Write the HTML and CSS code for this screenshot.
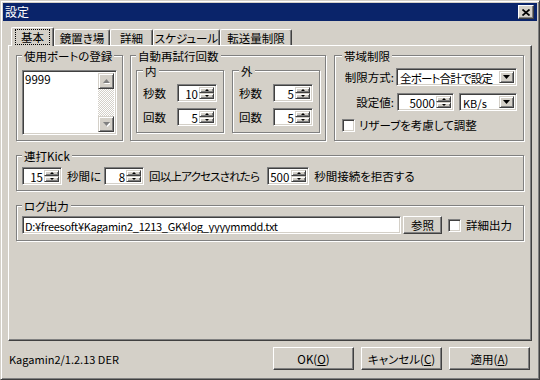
FILE: index.html
```html
<!DOCTYPE html>
<html>

<head>
	<meta charset="utf-8">
	<title>設定</title>
	<link rel="stylesheet" href="styles.css">
</head>

<body>

	<div class="window">
		<div class="titlebar">
			<span class="title">設定</span>
			<button class="btnClose raised" title="閉じる">
				<svg width="8" height="7" viewBox="0 0 8 7"><path d="M0.5 0.5 L7.5 6.5 M7.5 0.5 L0.5 6.5" stroke="#000" stroke-width="1.7"/></svg>
			</button>
		</div>

		<div class="client">
			<div class="tabs">
				<div class="tab selected w43"><span class="focus">基本</span></div>
				<div class="tab w56">鏡置き場</div>
				<div class="tab w43">詳細</div>
				<div class="tab w67">スケジュール</div>
				<div class="tab w72">転送量制限</div>
			</div>

			<div class="panel">
				<div class="topRow">
					<!-- ports -->
					<div class="group ports">
						<span class="groupTitle">使用ポートの登録</span>
						<div class="listbox sunken">
							<div class="listItems">9999</div>
							<div class="scrollbar">
								<span class="scrollBtn small">
									<svg width="7" height="5" viewBox="0 0 7 5"><polygon points="4.5,1 8,5 1,5" fill="#fff"/><polygon points="3.5,0 7,4 0,4" fill="#808080"/></svg>
								</span>
								<span class="scrollTrack"></span>
								<span class="scrollBtn small">
									<svg width="7" height="5" viewBox="0 0 7 5"><polygon points="1,1 8,1 4.5,5" fill="#fff"/><polygon points="0,0 7,0 3.5,4" fill="#808080"/></svg>
								</span>
							</div>
						</div>
					</div>

					<!-- retry -->
					<div class="group retry">
						<span class="groupTitle">自動再試行回数</span>
						<div class="retryBoxes">
							<div class="group sub">
								<span class="groupTitle">内</span>
								<div class="subRow">
									<span>秒数</span>
									<div class="spin sunken w40"><span class="val">10</span><span class="spinBtns"><span class="small up"></span><span class="small down"></span></span></div>
								</div>
								<div class="subRow">
									<span>回数</span>
									<div class="spin sunken w40"><span class="val">5</span><span class="spinBtns"><span class="small up"></span><span class="small down"></span></span></div>
								</div>
							</div>
							<div class="group sub">
								<span class="groupTitle">外</span>
								<div class="subRow">
									<span>秒数</span>
									<div class="spin sunken w40"><span class="val">5</span><span class="spinBtns"><span class="small up"></span><span class="small down"></span></span></div>
								</div>
								<div class="subRow">
									<span>回数</span>
									<div class="spin sunken w40"><span class="val">5</span><span class="spinBtns"><span class="small up"></span><span class="small down"></span></span></div>
								</div>
							</div>
						</div>
					</div>

					<!-- bandwidth -->
					<div class="group band">
						<span class="groupTitle">帯域制限</span>
						<div class="bandRow">
							<span class="bandLabel">制限方式:</span>
							<div class="combo sunken w121">
								<span class="comboText tight">全ポート合計で設定</span>
								<span class="comboBtn small"><svg width="7" height="4" viewBox="0 0 7 4"><polygon points="0,0 7,0 3.5,4" fill="#000"/></svg></span>
							</div>
						</div>
						<div class="bandRow">
							<span class="bandLabel gap3">設定値:</span>
							<div class="spin sunken w57"><span class="val">5000</span><span class="spinBtns"><span class="small up"></span><span class="small down"></span></span></div>
							<div class="combo sunken w58 ml5">
								<span class="comboText latin">KB/s</span>
								<span class="comboBtn small"><svg width="7" height="4" viewBox="0 0 7 4"><polygon points="0,0 7,0 3.5,4" fill="#000"/></svg></span>
							</div>
						</div>
						<div class="bandRow check">
							<span class="checkbox sunken"></span>
							<span class="checkLabel">リザーブを考慮して調整</span>
						</div>
					</div>
				</div>

				<!-- kick -->
				<div class="group kick">
					<span class="groupTitle">連打Kick</span>
					<div class="kickRow">
						<div class="spin sunken w40"><span class="val">15</span><span class="spinBtns"><span class="small up"></span><span class="small down"></span></span></div>
						<span class="kickText">秒間に</span>
						<div class="spin sunken w40"><span class="val">8</span><span class="spinBtns"><span class="small up"></span><span class="small down"></span></span></div>
						<span class="kickText tight wide">回以上アクセスされたら</span>
						<div class="spin sunken w42"><span class="val left">500</span><span class="spinBtns"><span class="small up"></span><span class="small down"></span></span></div>
						<span class="kickText">秒間接続を拒否する</span>
					</div>
				</div>

				<!-- log -->
				<div class="group log">
					<span class="groupTitle">ログ出力</span>
					<div class="logRow">
						<div class="textbox sunken latin path">D:¥freesoft¥Kagamin2_1213_GK¥log_yyyymmdd.txt</div>
						<button class="btn raised btnBrowse">参照</button>
						<span class="checkbox sunken ml6"></span>
						<span class="checkLabel ml5">詳細出力</span>
					</div>
				</div>
			</div>

			<div class="footer">
				<span class="version latin">Kagamin2/1.2.13 DER</span>
				<button class="btn raised btnFoot">OK(<u>O</u>)</button>
				<button class="btn raised btnFoot">キャンセル(<u>C</u>)</button>
				<button class="btn raised btnFoot last">適用(<u>A</u>)</button>
			</div>
		</div>
	</div>

</body>

</html>
```

FILE: styles.css
```css
* {
	box-sizing: border-box;
}

html, body {
	margin: 0;
	background: #d4d0c8;
	font-family: 'Noto Sans CJK JP', 'Noto Sans', sans-serif;
	font-feature-settings: "palt";
	font-size: 11.5px;
	line-height: 14px;
	color: #000;
}

button {
	font: inherit;
	color: #000;
	padding: 0;
	margin: 0;
}

.latin {
	font-size: 11px;
}

.tight {
	letter-spacing: -0.8px;
}

/* bevels */
.raised {
	background: #d4d0c8;
	border: 1px solid;
	border-color: #fff #404040 #404040 #fff;
	box-shadow: inset -1px -1px #808080;
}

.small {
	background: #d4d0c8;
	border: 1px solid;
	border-color: #d4d0c8 #404040 #404040 #d4d0c8;
	box-shadow: inset 1px 1px #fff, inset -1px -1px #808080;
}

.sunken {
	background: #fff;
	border: 1px solid;
	border-color: #808080 #fff #fff #808080;
	box-shadow: inset 1px 1px #404040, inset -1px -1px #d4d0c8;
}

/* window */
.window {
	width: 540px;
	height: 380px;
	display: flex;
	flex-direction: column;
	padding: 2px;
	border: 1px solid;
	border-color: #d4d0c8 #404040 #404040 #d4d0c8;
	box-shadow: inset 1px 1px #fff, inset -1px -1px #808080;
}

.titlebar {
	height: 18px;
	background: #0a246a;
	color: #fff;
	display: flex;
	align-items: center;
	justify-content: space-between;
	padding: 0 3px 0 2px;
	font-size: 12px;
}

.btnClose {
	width: 16px;
	height: 14px;
	display: flex;
	align-items: center;
	justify-content: center;
}

.client {
	flex: 1;
	padding: 0 5px;
}

/* tabs */
.tabs {
	position: relative;
	z-index: 1;
	display: flex;
	align-items: flex-end;
	margin-top: 6px;
	margin-bottom: -1px;
	padding-left: 3px;
}

.tab {
	height: 16px;
	margin-bottom: 1px;
	background: #d4d0c8;
	border-top: 1px solid #fff;
	border-left: 1px solid #fff;
	border-right: 1px solid #404040;
	border-radius: 2px 2px 0 0;
	box-shadow: inset -1px 0 #808080;
	display: flex;
	align-items: center;
	justify-content: center;
	padding-top: 1px;
	white-space: nowrap;
}

.tab.selected {
	height: 19px;
	margin-bottom: 0;
	padding-bottom: 2px;
}

.focus {
	outline: 1px dotted #000;
	padding: 0 5px;
	line-height: 14px;
}

.w43 { width: 43px; }
.w56 { width: 56px; }
.w67 { width: 67px; }
.w72 { width: 72px; }

/* panel */
.panel {
	height: 296px;
	border: 1px solid;
	border-color: #fff #404040 #404040 #fff;
	box-shadow: inset -1px -1px #808080;
	padding: 9px 7px 0 7px;
}

.topRow {
	display: flex;
	gap: 7px;
}

.group {
	display: flex;
	flex-direction: column;
	border: 1px solid #808080;
	box-shadow: inset 1px 1px #fff, 1px 1px #fff;
	padding: 0 5px;
}

.groupTitle {
	align-self: flex-start;
	margin-top: -7px;
	height: 14px;
	padding: 0 2px;
	background: #d4d0c8;
	white-space: nowrap;
}

.ports {
	width: 107px;
	height: 86px;
}

.retry {
	width: 196px;
	height: 86px;
}

.band {
	width: 190px;
	height: 86px;
	margin-left: 1px;
	padding: 0 6px 0 7px;
}

/* list */
.listbox {
	margin-top: 7px;
	width: 95px;
	height: 65px;
	display: flex;
	padding: 2px;
}

.listItems {
	flex: 1;
	line-height: 13px;
}

.scrollbar {
	width: 16px;
	display: flex;
	flex-direction: column;
}

.scrollBtn {
	height: 16px;
	display: flex;
	align-items: center;
	justify-content: center;
}

.scrollTrack {
	flex: 1;
	background: repeating-conic-gradient(#fff 0 25%, #d4d0c8 0 50%) 0 0 / 2px 2px;
}

/* retry boxes */
.retryBoxes {
	display: flex;
	gap: 8px;
	margin-top: 7px;
}

.sub {
	width: 88px;
	height: 63px;
	padding: 0 6px;
}

.subRow {
	display: flex;
	align-items: center;
	justify-content: space-between;
	margin-top: 6px;
}

/* spin */
.spin {
	height: 18px;
	display: flex;
	padding: 2px;
}

.spin .val {
	flex: 1;
	text-align: right;
	padding-right: 1px;
	line-height: 14px;
}

.spin .val.left {
	text-align: left;
}

.spinBtns {
	width: 15px;
	display: flex;
	flex-direction: column;
}

.spinBtns .small {
	flex: 1;
	display: flex;
	align-items: center;
	justify-content: center;
}

.up::before {
	content: "";
	border-left: 2px solid transparent;
	border-right: 2px solid transparent;
	border-bottom: 2px solid #000;
}

.down::before {
	content: "";
	border-left: 2px solid transparent;
	border-right: 2px solid transparent;
	border-top: 2px solid #000;
}

.w40 { width: 40px; }
.w42 { width: 42px; }
.w57 { width: 57px; }
.w58 { width: 58px; }
.w121 { width: 121px; }

/* band */
.bandRow {
	display: flex;
	align-items: center;
	margin-top: 7px;
}

.bandRow:nth-child(2) {
	margin-top: 5px;
}

.bandLabel {
	width: 52px;
	text-align: right;
	margin-right: 2px;
	white-space: nowrap;
}

.bandLabel.gap3 {
	margin-right: 3px;
}

.combo {
	height: 18px;
	display: flex;
	padding: 2px;
}

.comboText {
	flex: 1;
	padding-left: 1px;
	white-space: nowrap;
}

.comboBtn {
	width: 15px;
	flex: none;
	display: flex;
	align-items: center;
	justify-content: center;
}

.ml5 { margin-left: 5px; }
.ml6 { margin-left: 6px; }

.checkbox {
	width: 13px;
	height: 13px;
	flex: none;
}

.checkLabel {
	margin-left: 4px;
	white-space: nowrap;
}

.checkLabel.ml5 {
	margin-left: 5px;
}

/* kick */
.kick {
	margin-top: 14px;
}

.kickRow {
	display: flex;
	align-items: center;
	margin-top: 4px;
	padding-bottom: 5px;
}

.kickText {
	margin: 0 3px 0 5px;
	white-space: nowrap;
}

.kickText.wide {
	margin-right: 8px;
}

/* log */
.log {
	margin-top: 14px;
}

.logRow {
	display: flex;
	align-items: center;
	margin-top: 3px;
	padding-bottom: 6px;
}

.textbox {
	width: 379px;
	height: 18px;
	padding: 2px 2px 0 2px;
	white-space: nowrap;
	overflow: hidden;
}

.path {
	letter-spacing: -0.3px;
}

.btn {
	display: flex;
	align-items: center;
	justify-content: center;
}

.btnBrowse {
	width: 39px;
	height: 18px;
	margin-left: 2px;
}

/* footer */
.footer {
	display: flex;
	align-items: center;
	margin-top: 6px;
	padding-left: 1px;
}

.version {
	flex: 1;
}

.btnFoot {
	width: 81px;
	height: 23px;
	margin-left: 7px;
}

.btnFoot.last {
	margin-right: 2px;
}
```
